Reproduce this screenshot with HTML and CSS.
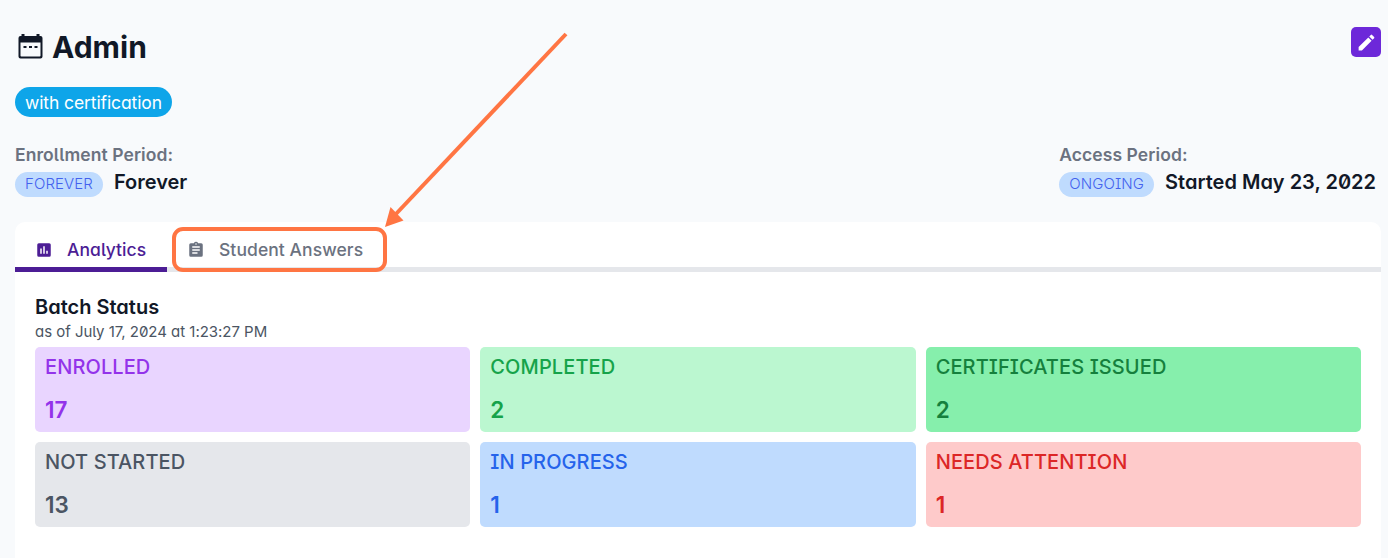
FILE: index.html
```html
<!DOCTYPE html>
<html lang="en">
<head>
  <meta charset="UTF-8" />
  <meta name="viewport" content="width=device-width, initial-scale=1.0"/>
  <title>Admin</title>
  <link rel="stylesheet" href="styles.css">
</head>
<body>
  <div class="page">
    <header class="header">
      <svg class="calendar-icon" viewBox="0 0 24 25" fill="currentColor"><path fill-rule="evenodd" d="M3 0h3v2h12V0h3v2h1q2 0 2 2v18.500q0 2-2 2H2q-2 0-2-2V4q0-2 2-2h1zM2 8.500v13.200q0 .8.8.8h18.400q.8 0 .8-.8V8.500z"/><path d="M5 12h3v2H5zm5.500 0h3v2h-3zm5.500 0h3v2h-3z"/></svg>
      <h1>Admin</h1>
      <button class="edit" aria-label="Edit">
        <svg viewBox="0 0 24 24" fill="currentColor"><path d="M3 17.250V21h3.750L17.810 9.940l-3.750-3.750L3 17.250zM20.710 7.040c.39-.39.39-1.020 0-1.410l-2.340-2.340a1 1 0 0 0-1.410 0l-1.830 1.830 3.750 3.750 1.830-1.830z"/></svg>
      </button>
    </header>

    <span class="tag">with certification</span>

    <div class="periods">
      <div>
        <p class="period-label">Enrollment Period:</p>
        <div class="period"><span class="badge">FOREVER</span><span class="period-value">Forever</span></div>
      </div>
      <div class="access">
        <p class="period-label">Access Period:</p>
        <div class="period"><span class="badge">ONGOING</span><span class="period-value">Started May 23, 2022</span></div>
      </div>
    </div>

    <div class="card">
      <nav class="tabs">
        <a class="tab active">
          <svg viewBox="0 0 24 24" fill="currentColor"><path d="M19 3H5a2 2 0 0 0-2 2v14a2 2 0 0 0 2 2h14a2 2 0 0 0 2-2V5a2 2 0 0 0-2-2zM9 17H7v-7h2zm4 0h-2V7h2zm4 0h-2v-4h2z"/></svg>
          <span>Analytics</span>
        </a>
        <a class="tab answers">
          <svg viewBox="0 0 24 24" fill="currentColor"><path d="M19 3h-4.180a3 3 0 0 0-5.640 0H5a2 2 0 0 0-2 2v14a2 2 0 0 0 2 2h14a2 2 0 0 0 2-2V5a2 2 0 0 0-2-2zm-7 0a1 1 0 1 1 0 2 1 1 0 0 1 0-2zm2 14H7v-2h7zm3-4H7v-2h10zm0-4H7V7h10z"/></svg>
          <span>Student Answers</span>
          <i class="highlight"></i>
        </a>
      </nav>
      <section class="status">
        <h2>Batch Status</h2>
        <p class="as-of">as of July 17, 2024 at 1:23:27 PM</p>
        <div class="stats">
          <div class="stat enrolled"><p>ENROLLED</p><strong>17</strong></div>
          <div class="stat completed"><p>COMPLETED</p><strong>2</strong></div>
          <div class="stat issued"><p>CERTIFICATES ISSUED</p><strong>2</strong></div>
          <div class="stat not-started"><p>NOT STARTED</p><strong>13</strong></div>
          <div class="stat in-progress"><p>IN PROGRESS</p><strong>1</strong></div>
          <div class="stat attention"><p>NEEDS ATTENTION</p><strong>1</strong></div>
        </div>
      </section>
    </div>
  </div>

  <!-- arrow pointing at the Student Answers tab -->
  <svg class="arrow" viewBox="0 0 190 200"><path d="M186 4 15 185" stroke="#ff7543" stroke-width="4"/><path d="M5 197 10.500 177 23.500 190.500z" fill="#ff7543"/></svg>
</body>
</html>
```

FILE: styles.css
```css
* {
  box-sizing: border-box;
}

body {
  margin: 0;
  font-family: Inter, sans-serif;
  font-feature-settings: "ss02", "zero", "cv05", "cv08", "cv11";
  background: #f8fafc;
  color: #111827;
  overflow: hidden;
}

h1, h2, p {
  margin: 0;
}

.page {
  display: flex;
  flex-direction: column;
  height: 558px;
  padding: 27px 7px 0 15px;
}

.header {
  display: flex;
  height: 40px;
  padding-left: 3px;
}

.calendar-icon {
  width: 25px;
  height: 25px;
  margin-top: 7px;
}

h1 {
  margin-left: 9px;
  font-size: 30px;
  line-height: 41px;
  font-weight: 650;
}

.edit {
  display: flex;
  align-items: center;
  justify-content: center;
  width: 30px;
  height: 30px;
  margin-left: auto;
  padding: 0;
  border: none;
  border-radius: 5px;
  background: #6d28d9;
  color: white;
}

.edit svg {
  width: 21px;
}

.tag {
  align-self: flex-start;
  margin-top: 20px;
  padding: 0 10px;
  border-radius: 15px;
  background: #0ea5e9;
  color: white;
  font-size: 17.5px;
  line-height: 31px;
  height: 30px;
  letter-spacing: -0.1px;
}

.periods {
  display: flex;
  justify-content: space-between;
  height: 80px;
  margin-top: 25px;
}

.access {
  padding-right: 5px;
}

.period-label {
  color: #6b7280;
  font-size: 17.5px;
  line-height: 26px;
  font-weight: 600;
  letter-spacing: 0.08px;
}

.period {
  display: flex;
  align-items: flex-start;
  gap: 11px;
}

.badge {
  height: 25px;
  margin-top: 4px;
  padding: 0 10px;
  border-radius: 13px;
  background: #bfdbfe;
  color: #4361ee;
  font-size: 15px;
  line-height: 24px;
  font-weight: 300;
  letter-spacing: 0.1px;
}

.period-value {
  font-size: 20px;
  line-height: 28px;
  font-weight: 600;
}

.card {
  flex: 1;
  border-radius: 10px 10px 0 0;
  background: white;
}

.tabs {
  display: flex;
  height: 50px;
  border-bottom: 5px solid #e5e7eb;
}

.tab {
  display: flex;
  align-items: center;
  height: 50px;
  padding: 5px 20px 0;
  color: #6b7280;
  font-size: 17.5px;
  font-weight: 500;
  letter-spacing: 0.07px;
}

.tab svg {
  width: 18px;
  height: 18px;
  margin-right: 14px;
}

.active {
  width: 152px;
  border-bottom: 5px solid #4c1d95;
  padding-top: 10px;
  color: #4c1d95;
}

.answers {
  position: relative;
}

.highlight {
  position: absolute;
  left: 5px;
  top: 5px;
  width: 215px;
  height: 45px;
  border: 4px solid #ff7543;
  border-radius: 11px;
}

.status {
  padding: 21px 20px 0;
}

h2 {
  font-size: 20px;
  line-height: 28px;
  font-weight: 600;
}

.as-of {
  color: #4b5563;
  font-size: 15px;
  line-height: 22px;
  letter-spacing: -0.03px;
}

.stats {
  display: grid;
  grid-template-columns: repeat(3, 1fr);
  grid-auto-rows: 85px;
  gap: 10px;
  margin-top: 4px;
}

.stat {
  padding: 5px 10px;
  border-radius: 5px;
  font-size: 20px;
  line-height: 30px;
  font-weight: 500;
  letter-spacing: 0.1px;
}

.stat strong {
  display: block;
  margin-top: 10px;
  font-size: 22.5px;
  line-height: 35px;
  font-weight: 600;
}

.enrolled {
  background: #e9d5ff;
  color: #9333ea;
}

.completed {
  background: #bbf7d0;
  color: #16a34a;
}

.issued {
  background: #86efac;
  color: #15803d;
}

.not-started {
  background: #e5e7eb;
  color: #4b5563;
}

.in-progress {
  background: #bfdbfe;
  color: #2563eb;
}

.attention {
  background: #fecaca;
  color: #dc2626;
}

.arrow {
  position: absolute;
  left: 380px;
  top: 30px;
  width: 190px;
  height: 200px;
  fill: none;
}
```
